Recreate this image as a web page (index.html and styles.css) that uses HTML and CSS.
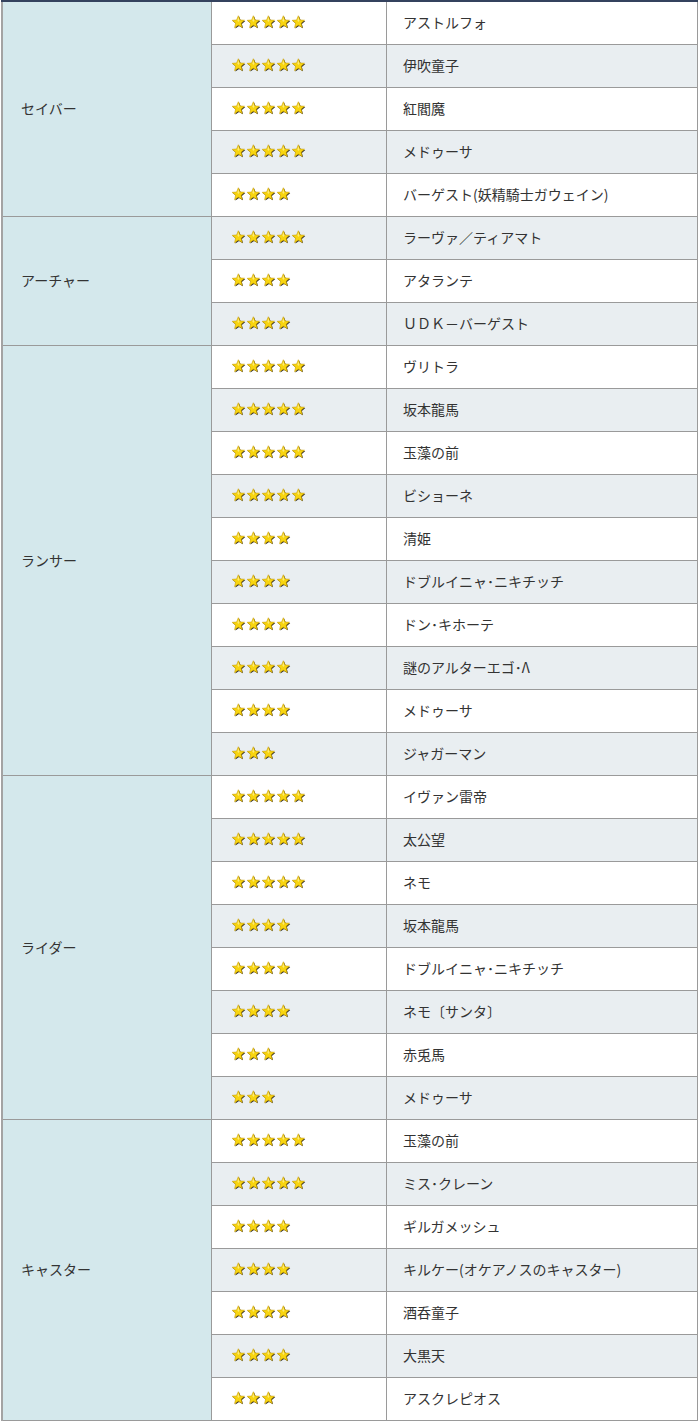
FILE: index.html
```html
<!DOCTYPE html>
<html lang="ja">
<head>
    <meta charset="UTF-8">
    <meta name="viewport" content="width=device-width, initial-scale=1.0">
    <title>クラス別サーヴァント</title>

    <!-- styling -->
    <link rel="stylesheet" href="styles.css">
</head>
<body>
    <svg width="0" height="0" class="defs">
        <defs>
            <symbol id="star" viewBox="0 0 16 16">
                <polygon points="8.6,1.6 10.5,6.1 15.2,6.4 11.6,9.5 12.8,14.2 8.6,11.6 4.6,14.4 5.7,9.6 2,6.5 6.8,6.1" fill="#2a2a2a"/>
                <polygon points="7.8,0.8 9.7,5.3 14.4,5.6 10.8,8.7 12,13.4 7.8,10.8 3.8,13.6 4.9,8.8 1.2,5.7 6,5.3" fill="#f8d510" stroke="#c79b00" stroke-width="0.6"/>
                <polygon points="7.8,2.4 9,5.8 7.8,7.5 6.8,5.8" fill="#fff3a0" opacity="0.7"/>
            </symbol>
        </defs>
    </svg>

    <table class="servant-table">
        <tbody>
            <!-- セイバー -->
            <tr>
                <td class="class-cell" rowspan="5">セイバー</td>
                <td class="rare"><span class="stars s5"></span></td>
                <td class="name">アストルフォ</td>
            </tr>
            <tr>
                <td class="rare"><span class="stars s5"></span></td>
                <td class="name">伊吹童子</td>
            </tr>
            <tr>
                <td class="rare"><span class="stars s5"></span></td>
                <td class="name">紅閻魔</td>
            </tr>
            <tr>
                <td class="rare"><span class="stars s5"></span></td>
                <td class="name">メドゥーサ</td>
            </tr>
            <tr>
                <td class="rare"><span class="stars s4"></span></td>
                <td class="name">バーゲスト(妖精騎士ガウェイン)</td>
            </tr>

            <!-- アーチャー -->
            <tr>
                <td class="class-cell" rowspan="3">アーチャー</td>
                <td class="rare"><span class="stars s5"></span></td>
                <td class="name">ラーヴァ／ティアマト</td>
            </tr>
            <tr>
                <td class="rare"><span class="stars s4"></span></td>
                <td class="name">アタランテ</td>
            </tr>
            <tr>
                <td class="rare"><span class="stars s4"></span></td>
                <td class="name">ＵＤＫ－バーゲスト</td>
            </tr>

            <!-- ランサー -->
            <tr>
                <td class="class-cell" rowspan="10">ランサー</td>
                <td class="rare"><span class="stars s5"></span></td>
                <td class="name">ヴリトラ</td>
            </tr>
            <tr>
                <td class="rare"><span class="stars s5"></span></td>
                <td class="name">坂本龍馬</td>
            </tr>
            <tr>
                <td class="rare"><span class="stars s5"></span></td>
                <td class="name">玉藻の前</td>
            </tr>
            <tr>
                <td class="rare"><span class="stars s5"></span></td>
                <td class="name">ビショーネ</td>
            </tr>
            <tr>
                <td class="rare"><span class="stars s4"></span></td>
                <td class="name">清姫</td>
            </tr>
            <tr>
                <td class="rare"><span class="stars s4"></span></td>
                <td class="name">ドブルイニャ･ニキチッチ</td>
            </tr>
            <tr>
                <td class="rare"><span class="stars s4"></span></td>
                <td class="name">ドン･キホーテ</td>
            </tr>
            <tr>
                <td class="rare"><span class="stars s4"></span></td>
                <td class="name">謎のアルターエゴ･Λ</td>
            </tr>
            <tr>
                <td class="rare"><span class="stars s4"></span></td>
                <td class="name">メドゥーサ</td>
            </tr>
            <tr>
                <td class="rare"><span class="stars s3"></span></td>
                <td class="name">ジャガーマン</td>
            </tr>

            <!-- ライダー -->
            <tr>
                <td class="class-cell" rowspan="8">ライダー</td>
                <td class="rare"><span class="stars s5"></span></td>
                <td class="name">イヴァン雷帝</td>
            </tr>
            <tr>
                <td class="rare"><span class="stars s5"></span></td>
                <td class="name">太公望</td>
            </tr>
            <tr>
                <td class="rare"><span class="stars s5"></span></td>
                <td class="name">ネモ</td>
            </tr>
            <tr>
                <td class="rare"><span class="stars s4"></span></td>
                <td class="name">坂本龍馬</td>
            </tr>
            <tr>
                <td class="rare"><span class="stars s4"></span></td>
                <td class="name">ドブルイニャ･ニキチッチ</td>
            </tr>
            <tr>
                <td class="rare"><span class="stars s4"></span></td>
                <td class="name">ネモ〔サンタ〕</td>
            </tr>
            <tr>
                <td class="rare"><span class="stars s3"></span></td>
                <td class="name">赤兎馬</td>
            </tr>
            <tr>
                <td class="rare"><span class="stars s3"></span></td>
                <td class="name">メドゥーサ</td>
            </tr>

            <!-- キャスター -->
            <tr>
                <td class="class-cell" rowspan="7">キャスター</td>
                <td class="rare"><span class="stars s5"></span></td>
                <td class="name">玉藻の前</td>
            </tr>
            <tr>
                <td class="rare"><span class="stars s5"></span></td>
                <td class="name">ミス･クレーン</td>
            </tr>
            <tr>
                <td class="rare"><span class="stars s4"></span></td>
                <td class="name">ギルガメッシュ</td>
            </tr>
            <tr>
                <td class="rare"><span class="stars s4"></span></td>
                <td class="name">キルケー(オケアノスのキャスター)</td>
            </tr>
            <tr>
                <td class="rare"><span class="stars s4"></span></td>
                <td class="name">酒呑童子</td>
            </tr>
            <tr>
                <td class="rare"><span class="stars s4"></span></td>
                <td class="name">大黒天</td>
            </tr>
            <tr>
                <td class="rare"><span class="stars s3"></span></td>
                <td class="name">アスクレピオス</td>
            </tr>
        </tbody>
    </table>

    <script>
        // fill each rarity cell with the right number of stars
        const starCells = document.querySelectorAll(".stars");

        starCells.forEach((cell) => {
            let count = 3;
            if (cell.classList.contains("s5")) count = 5;
            if (cell.classList.contains("s4")) count = 4;

            for (let i = 0; i < count; i++) {
                cell.innerHTML += '<svg class="star" viewBox="0 0 16 16"><use href="#star"></use></svg>';
            }
        });
    </script>
</body>
</html>
```

FILE: styles.css
```css
body {
    margin: 0;
    padding: 0 0 0 1px;
    background-color: #ffffff;
    font-family: "Noto Sans CJK JP", "Noto Sans", sans-serif;
    color: #333333;
}

.defs {
    position: absolute;
}

.servant-table {
    border-collapse: collapse;
    width: 697px;
    font-size: 14px;
    border-top: 2px solid #34425e;
    border-left: 2px solid #a3a3a3;
}

.servant-table td {
    height: 40px;
    padding: 0 0 2px 0;
    border: 1px solid #9a9a9a;
    vertical-align: middle;
}

.servant-table tr:nth-child(even) td {
    background-color: #e9eef1;
}

.servant-table tr:nth-child(odd) td {
    background-color: #ffffff;
}

.servant-table tr td.class-cell {
    width: 190px;
    padding-left: 18px;
    background-color: #d4e8ec;
}

.servant-table td.rare {
    width: 155px;
    padding-left: 19px;
}

.servant-table td.name {
    padding-left: 16px;
}

.stars {
    display: flex;
    gap: 0;
    padding-top: 1px;
}

.star {
    width: 15px;
    height: 15px;
    display: block;
}
```
